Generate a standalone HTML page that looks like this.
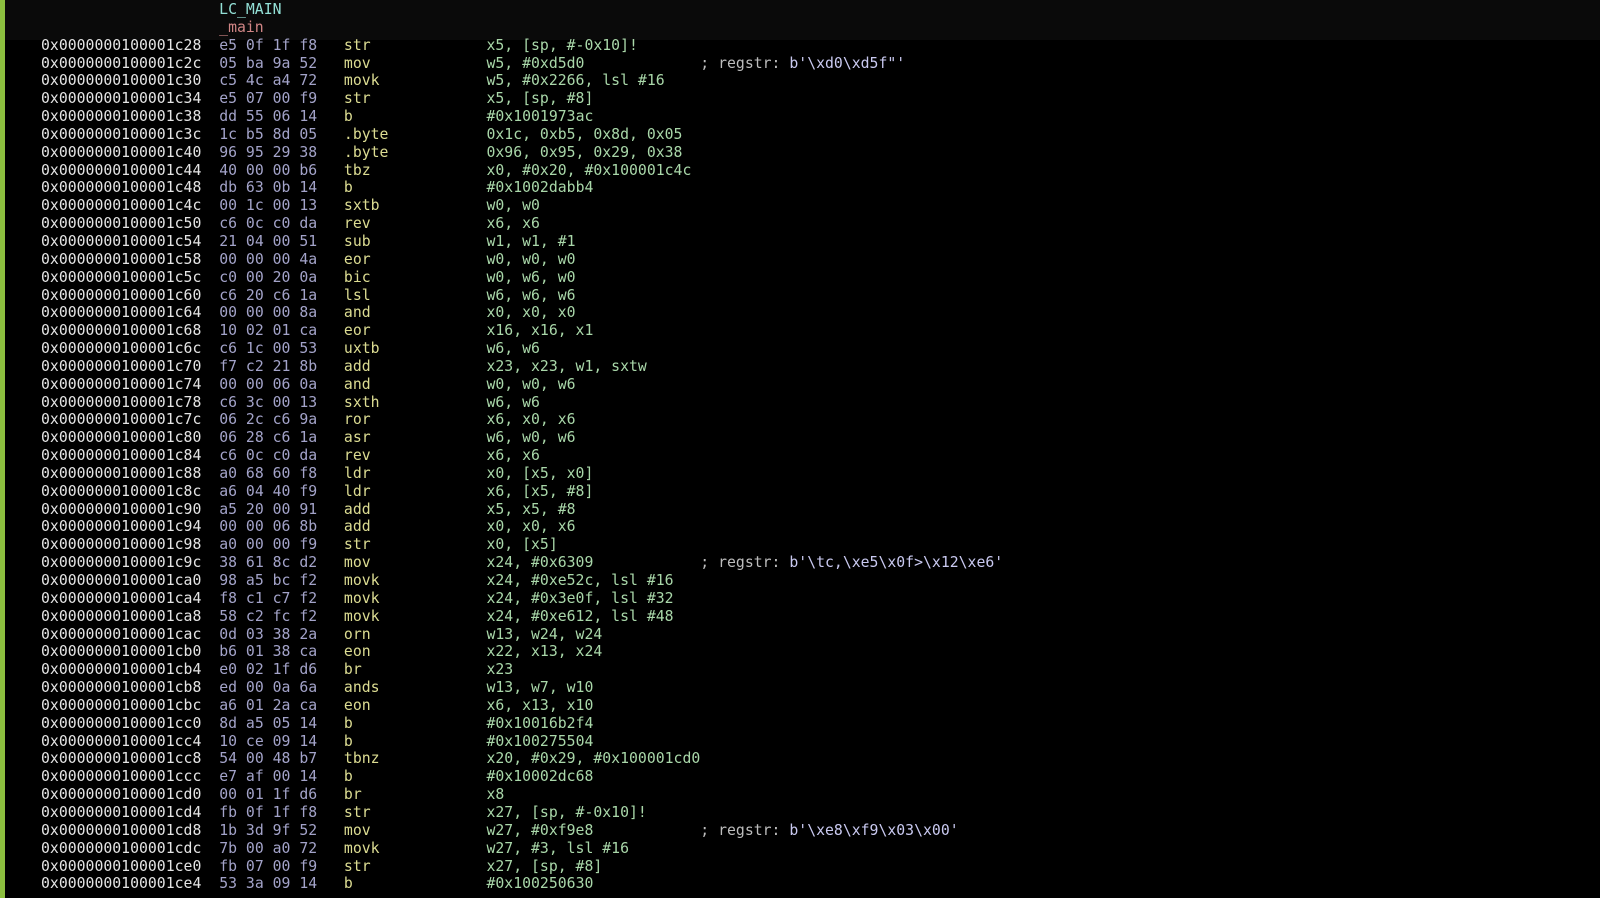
<!DOCTYPE html>
<html><head><meta charset="utf-8"><style>
html,body{margin:0;padding:0;background:#000;width:1600px;height:898px;overflow:hidden}
.bar{position:absolute;left:0;top:0;width:5px;height:898px;background:#8cbf3f}
.top{position:absolute;left:5px;top:0;width:1595px;height:40px;background:#0a0a0a}
pre{position:absolute;left:41px;top:1px;margin:0;font-family:"DejaVu Sans Mono","Liberation Mono",monospace;font-size:14.8px;line-height:17.85px;color:#e2e2e2;white-space:pre}
.a{color:#e4e4e4}.b{color:#a3a3c9}.m{color:#dcdc92}.o{color:#a9d7a9}.c{color:#bdbdbd}.s{color:#c9c9f0}.l{color:#93e0d6}.n{color:#d08585}
</style></head><body><div class="top"></div><div class="bar"></div>
<pre>                    <span class="l">LC_MAIN</span>
                    <span class="n">_main</span>
<span class="a">0x0000000100001c28</span>  <span class="b">e5 0f 1f f8</span>   <span class="m">str</span>             <span class="o">x5, [sp, #-0x10]!</span>
<span class="a">0x0000000100001c2c</span>  <span class="b">05 ba 9a 52</span>   <span class="m">mov</span>             <span class="o">w5, #0xd5d0</span>             <span class="c">; regstr: </span><span class="s">b'\xd0\xd5f"'</span>
<span class="a">0x0000000100001c30</span>  <span class="b">c5 4c a4 72</span>   <span class="m">movk</span>            <span class="o">w5, #0x2266, lsl #16</span>
<span class="a">0x0000000100001c34</span>  <span class="b">e5 07 00 f9</span>   <span class="m">str</span>             <span class="o">x5, [sp, #8]</span>
<span class="a">0x0000000100001c38</span>  <span class="b">dd 55 06 14</span>   <span class="m">b</span>               <span class="o">#0x1001973ac</span>
<span class="a">0x0000000100001c3c</span>  <span class="b">1c b5 8d 05</span>   <span class="m">.byte</span>           <span class="o">0x1c, 0xb5, 0x8d, 0x05</span>
<span class="a">0x0000000100001c40</span>  <span class="b">96 95 29 38</span>   <span class="m">.byte</span>           <span class="o">0x96, 0x95, 0x29, 0x38</span>
<span class="a">0x0000000100001c44</span>  <span class="b">40 00 00 b6</span>   <span class="m">tbz</span>             <span class="o">x0, #0x20, #0x100001c4c</span>
<span class="a">0x0000000100001c48</span>  <span class="b">db 63 0b 14</span>   <span class="m">b</span>               <span class="o">#0x1002dabb4</span>
<span class="a">0x0000000100001c4c</span>  <span class="b">00 1c 00 13</span>   <span class="m">sxtb</span>            <span class="o">w0, w0</span>
<span class="a">0x0000000100001c50</span>  <span class="b">c6 0c c0 da</span>   <span class="m">rev</span>             <span class="o">x6, x6</span>
<span class="a">0x0000000100001c54</span>  <span class="b">21 04 00 51</span>   <span class="m">sub</span>             <span class="o">w1, w1, #1</span>
<span class="a">0x0000000100001c58</span>  <span class="b">00 00 00 4a</span>   <span class="m">eor</span>             <span class="o">w0, w0, w0</span>
<span class="a">0x0000000100001c5c</span>  <span class="b">c0 00 20 0a</span>   <span class="m">bic</span>             <span class="o">w0, w6, w0</span>
<span class="a">0x0000000100001c60</span>  <span class="b">c6 20 c6 1a</span>   <span class="m">lsl</span>             <span class="o">w6, w6, w6</span>
<span class="a">0x0000000100001c64</span>  <span class="b">00 00 00 8a</span>   <span class="m">and</span>             <span class="o">x0, x0, x0</span>
<span class="a">0x0000000100001c68</span>  <span class="b">10 02 01 ca</span>   <span class="m">eor</span>             <span class="o">x16, x16, x1</span>
<span class="a">0x0000000100001c6c</span>  <span class="b">c6 1c 00 53</span>   <span class="m">uxtb</span>            <span class="o">w6, w6</span>
<span class="a">0x0000000100001c70</span>  <span class="b">f7 c2 21 8b</span>   <span class="m">add</span>             <span class="o">x23, x23, w1, sxtw</span>
<span class="a">0x0000000100001c74</span>  <span class="b">00 00 06 0a</span>   <span class="m">and</span>             <span class="o">w0, w0, w6</span>
<span class="a">0x0000000100001c78</span>  <span class="b">c6 3c 00 13</span>   <span class="m">sxth</span>            <span class="o">w6, w6</span>
<span class="a">0x0000000100001c7c</span>  <span class="b">06 2c c6 9a</span>   <span class="m">ror</span>             <span class="o">x6, x0, x6</span>
<span class="a">0x0000000100001c80</span>  <span class="b">06 28 c6 1a</span>   <span class="m">asr</span>             <span class="o">w6, w0, w6</span>
<span class="a">0x0000000100001c84</span>  <span class="b">c6 0c c0 da</span>   <span class="m">rev</span>             <span class="o">x6, x6</span>
<span class="a">0x0000000100001c88</span>  <span class="b">a0 68 60 f8</span>   <span class="m">ldr</span>             <span class="o">x0, [x5, x0]</span>
<span class="a">0x0000000100001c8c</span>  <span class="b">a6 04 40 f9</span>   <span class="m">ldr</span>             <span class="o">x6, [x5, #8]</span>
<span class="a">0x0000000100001c90</span>  <span class="b">a5 20 00 91</span>   <span class="m">add</span>             <span class="o">x5, x5, #8</span>
<span class="a">0x0000000100001c94</span>  <span class="b">00 00 06 8b</span>   <span class="m">add</span>             <span class="o">x0, x0, x6</span>
<span class="a">0x0000000100001c98</span>  <span class="b">a0 00 00 f9</span>   <span class="m">str</span>             <span class="o">x0, [x5]</span>
<span class="a">0x0000000100001c9c</span>  <span class="b">38 61 8c d2</span>   <span class="m">mov</span>             <span class="o">x24, #0x6309</span>            <span class="c">; regstr: </span><span class="s">b'\tc,\xe5\x0f>\x12\xe6'</span>
<span class="a">0x0000000100001ca0</span>  <span class="b">98 a5 bc f2</span>   <span class="m">movk</span>            <span class="o">x24, #0xe52c, lsl #16</span>
<span class="a">0x0000000100001ca4</span>  <span class="b">f8 c1 c7 f2</span>   <span class="m">movk</span>            <span class="o">x24, #0x3e0f, lsl #32</span>
<span class="a">0x0000000100001ca8</span>  <span class="b">58 c2 fc f2</span>   <span class="m">movk</span>            <span class="o">x24, #0xe612, lsl #48</span>
<span class="a">0x0000000100001cac</span>  <span class="b">0d 03 38 2a</span>   <span class="m">orn</span>             <span class="o">w13, w24, w24</span>
<span class="a">0x0000000100001cb0</span>  <span class="b">b6 01 38 ca</span>   <span class="m">eon</span>             <span class="o">x22, x13, x24</span>
<span class="a">0x0000000100001cb4</span>  <span class="b">e0 02 1f d6</span>   <span class="m">br</span>              <span class="o">x23</span>
<span class="a">0x0000000100001cb8</span>  <span class="b">ed 00 0a 6a</span>   <span class="m">ands</span>            <span class="o">w13, w7, w10</span>
<span class="a">0x0000000100001cbc</span>  <span class="b">a6 01 2a ca</span>   <span class="m">eon</span>             <span class="o">x6, x13, x10</span>
<span class="a">0x0000000100001cc0</span>  <span class="b">8d a5 05 14</span>   <span class="m">b</span>               <span class="o">#0x10016b2f4</span>
<span class="a">0x0000000100001cc4</span>  <span class="b">10 ce 09 14</span>   <span class="m">b</span>               <span class="o">#0x100275504</span>
<span class="a">0x0000000100001cc8</span>  <span class="b">54 00 48 b7</span>   <span class="m">tbnz</span>            <span class="o">x20, #0x29, #0x100001cd0</span>
<span class="a">0x0000000100001ccc</span>  <span class="b">e7 af 00 14</span>   <span class="m">b</span>               <span class="o">#0x10002dc68</span>
<span class="a">0x0000000100001cd0</span>  <span class="b">00 01 1f d6</span>   <span class="m">br</span>              <span class="o">x8</span>
<span class="a">0x0000000100001cd4</span>  <span class="b">fb 0f 1f f8</span>   <span class="m">str</span>             <span class="o">x27, [sp, #-0x10]!</span>
<span class="a">0x0000000100001cd8</span>  <span class="b">1b 3d 9f 52</span>   <span class="m">mov</span>             <span class="o">w27, #0xf9e8</span>            <span class="c">; regstr: </span><span class="s">b'\xe8\xf9\x03\x00'</span>
<span class="a">0x0000000100001cdc</span>  <span class="b">7b 00 a0 72</span>   <span class="m">movk</span>            <span class="o">w27, #3, lsl #16</span>
<span class="a">0x0000000100001ce0</span>  <span class="b">fb 07 00 f9</span>   <span class="m">str</span>             <span class="o">x27, [sp, #8]</span>
<span class="a">0x0000000100001ce4</span>  <span class="b">53 3a 09 14</span>   <span class="m">b</span>               <span class="o">#0x100250630</span>
</pre></body></html>
